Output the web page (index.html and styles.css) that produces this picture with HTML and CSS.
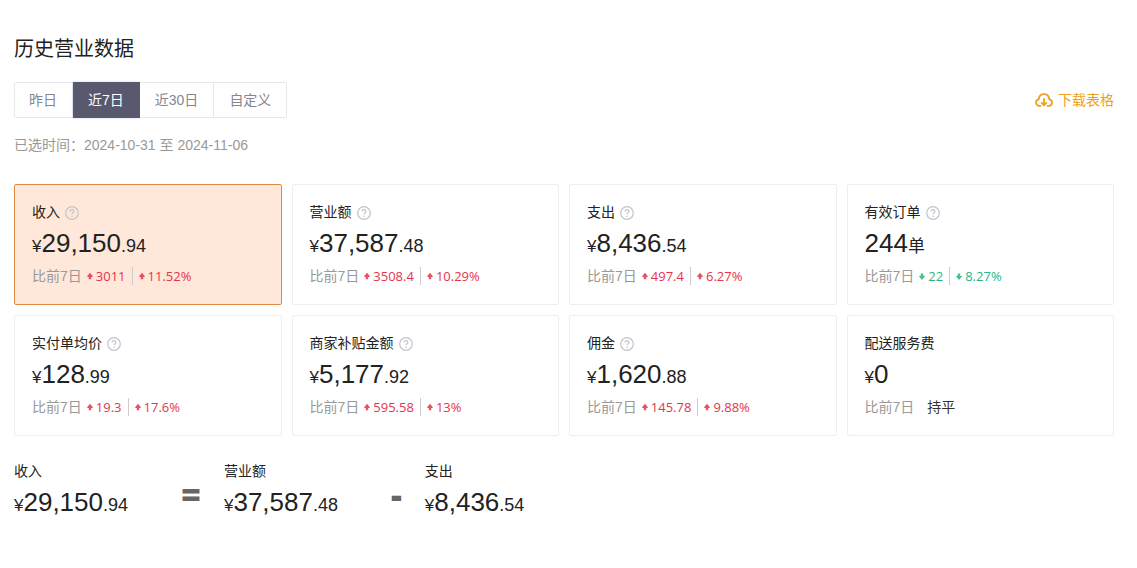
FILE: index.html
```html
<!DOCTYPE html>
<html lang="zh-CN">
<head>
<meta charset="utf-8">
<meta name="viewport" content="width=device-width, initial-scale=1">
<title>历史营业数据</title>
<link rel="stylesheet" href="styles.css">
</head>
<body>
<svg class="sprite" aria-hidden="true">
  <symbol id="help" viewBox="0 0 14 14"><circle cx="7" cy="7" r="6.3" fill="none" stroke="currentColor" stroke-width="1.2"/><path d="M5.1 5.6c0-1.2.8-1.9 1.9-1.9s1.9.7 1.9 1.7c0 1.2-1.8 1.4-1.8 2.9" fill="none" stroke="currentColor" stroke-width="1.2"/><circle cx="7.1" cy="10.2" r=".8" fill="currentColor"/></symbol>
  <symbol id="up" viewBox="0 0 6 8"><path d="M3 .8 5.9 4.2 5.500 4.900H4.200V7.200H1.800V4.900H.5L.1 4.200z" fill="currentColor"/></symbol>
  <symbol id="down" viewBox="0 0 6 8"><path d="M3 7.900 5.900 4.500 5.500 3.800H4.200V1.500H1.800V3.800H.5L.1 4.500z" fill="currentColor"/></symbol>
</svg>
<main class="page">
  <h1 class="title">历史营业数据</h1>
  <div class="toolbar">
    <div class="tabs">
      <button class="tab" type="button">昨日</button>
      <button class="tab active" type="button" aria-pressed="true">近7日</button>
      <button class="tab" type="button">近30日</button>
      <button class="tab" type="button">自定义</button>
    </div>
    <a class="download" href="#"><svg class="cloud" viewBox="0 0 18 14" fill="none" stroke="currentColor" stroke-width="1.8" stroke-linecap="round" stroke-linejoin="round" aria-hidden="true"><path d="M5.500 12.800H4.500C2.400 12.800 1 11.300 1 9.500c0-1.700 1.100-2.900 2.700-3.200C4 3.300 6.200 1.200 9 1.200s5 2.100 5.300 5.100c1.600.3 2.700 1.500 2.700 3.200 0 1.800-1.400 3.300-3.500 3.300h-1"/><path d="M9 6v6.300M6.600 9.900 9 12.300l2.400-2.400"/></svg>下载表格</a>
  </div>
  <p class="range">已选时间：2024-10-31 至 2024-11-06</p>

  <section class="cards">
    <article class="card selected">
      <h2 class="name">收入<svg class="help"><use href="#help"/></svg></h2>
      <p class="value"><span class="unit">¥</span>29,150<span class="cents">.94</span></p>
      <p class="compare">比前7日<span class="delta rise"><svg class="arrow"><use href="#up"/></svg>3011</span><span class="delta rise"><svg class="arrow"><use href="#up"/></svg>11.52%</span></p>
    </article>
    <article class="card">
      <h2 class="name">营业额<svg class="help"><use href="#help"/></svg></h2>
      <p class="value"><span class="unit">¥</span>37,587<span class="cents">.48</span></p>
      <p class="compare">比前7日<span class="delta rise"><svg class="arrow"><use href="#up"/></svg>3508.4</span><span class="delta rise"><svg class="arrow"><use href="#up"/></svg>10.29%</span></p>
    </article>
    <article class="card">
      <h2 class="name">支出<svg class="help"><use href="#help"/></svg></h2>
      <p class="value"><span class="unit">¥</span>8,436<span class="cents">.54</span></p>
      <p class="compare">比前7日<span class="delta rise"><svg class="arrow"><use href="#up"/></svg>497.4</span><span class="delta rise"><svg class="arrow"><use href="#up"/></svg>6.27%</span></p>
    </article>
    <article class="card">
      <h2 class="name">有效订单<svg class="help"><use href="#help"/></svg></h2>
      <p class="value">244<span class="unit">单</span></p>
      <p class="compare">比前7日<span class="delta fall"><svg class="arrow"><use href="#down"/></svg>22</span><span class="delta fall"><svg class="arrow"><use href="#down"/></svg>8.27%</span></p>
    </article>
    <article class="card">
      <h2 class="name">实付单均价<svg class="help"><use href="#help"/></svg></h2>
      <p class="value"><span class="unit">¥</span>128<span class="cents">.99</span></p>
      <p class="compare">比前7日<span class="delta rise"><svg class="arrow"><use href="#up"/></svg>19.3</span><span class="delta rise"><svg class="arrow"><use href="#up"/></svg>17.6%</span></p>
    </article>
    <article class="card">
      <h2 class="name">商家补贴金额<svg class="help"><use href="#help"/></svg></h2>
      <p class="value"><span class="unit">¥</span>5,177<span class="cents">.92</span></p>
      <p class="compare">比前7日<span class="delta rise"><svg class="arrow"><use href="#up"/></svg>595.58</span><span class="delta rise"><svg class="arrow"><use href="#up"/></svg>13%</span></p>
    </article>
    <article class="card">
      <h2 class="name">佣金<svg class="help"><use href="#help"/></svg></h2>
      <p class="value"><span class="unit">¥</span>1,620<span class="cents">.88</span></p>
      <p class="compare">比前7日<span class="delta rise"><svg class="arrow"><use href="#up"/></svg>145.78</span><span class="delta rise"><svg class="arrow"><use href="#up"/></svg>9.88%</span></p>
    </article>
    <article class="card">
      <h2 class="name">配送服务费</h2>
      <p class="value"><span class="unit">¥</span>0</p>
      <p class="compare">比前7日<span class="even">持平</span></p>
    </article>
  </section>

  <section class="equation">
    <div class="term">
      <h2 class="name">收入</h2>
      <p class="value"><span class="unit">¥</span>29,150<span class="cents">.94</span></p>
    </div>
    <span class="operator">=</span>
    <div class="term">
      <h2 class="name">营业额</h2>
      <p class="value"><span class="unit">¥</span>37,587<span class="cents">.48</span></p>
    </div>
    <span class="operator">-</span>
    <div class="term">
      <h2 class="name">支出</h2>
      <p class="value"><span class="unit">¥</span>8,436<span class="cents">.54</span></p>
    </div>
  </section>
</main>
</body>
</html>
```

FILE: styles.css
```css
* { box-sizing: border-box; }
body {
  margin: 0;
  background: #fff;
  color: #222;
  font: 14px/20px "Liberation Sans", "Noto Sans CJK SC", sans-serif;
}
h1, h2, p { margin: 0; font-weight: 400; }
.sprite { display: none; }
.page { padding: 35px 23px 34px 14px; }
.title { font-size: 20px; line-height: 28px; }

.toolbar {
  display: flex;
  justify-content: space-between;
  align-items: center;
  margin-top: 19px;
}
.tabs { display: flex; }
.tab {
  height: 36px;
  padding: 0 15px;
  border: 1px solid #e8e8ec;
  border-left-width: 0;
  background: #fff;
  color: #858692;
  font: inherit;
}
.tab:first-child { padding-left: 14px; border-left-width: 1px; border-radius: 2px 0 0 2px; }
.tab:last-child { border-radius: 0 2px 2px 0; }
.tab.active {
  border-color: #58596e;
  background: #58596e;
  color: #fff;
  box-shadow: 0 0 2px #cfd4f0;
}
.download {
  display: flex;
  align-items: center;
  gap: 5px;
  color: #f0a020;
  text-decoration: none;
}
.cloud { width: 18px; height: 14px; }
.range { margin-top: 17px; color: #999; }

.cards {
  display: grid;
  grid-template-columns: repeat(4, 1fr);
  gap: 10px;
  margin-top: 29px;
}
.card {
  padding: 17px 17px 18px;
  border: 1px solid #eee;
  border-radius: 2px;
}
.card.selected { border-color: #e08a45; background: #ffe8d9; }
.name {
  display: flex;
  align-items: center;
  gap: 5px;
  font-size: 14px;
  line-height: 20px;
}
.help { width: 14px; height: 14px; margin-top: 2px; color: #c3c3cc; }
.value { font-size: 26px; line-height: 42px; }
.unit, .cents { line-height: 20px; }
.unit { font-size: 17px; }
.cents { font-size: 18px; }
.compare {
  display: flex;
  align-items: center;
  margin-top: 2px;
  color: #999;
}
.delta {
  display: flex;
  align-items: center;
  gap: 3px;
  margin-left: 5px;
  font-family: "Open Sans", sans-serif;
  font-size: 13px;
  line-height: 18px;
}
.delta + .delta {
  margin-left: 6px;
  padding-left: 6px;
  border-left: 1px solid #ccc;
}
.arrow { width: 6px; height: 8px; opacity: 0.85; }
.rise { color: #e5344c; }
.fall { color: #2bb583; }
.even { margin-left: 13px; color: #333; }

.equation { display: flex; margin-top: 25px; }
.operator {
  margin: 0 23px 0 53px;
  color: #666;
  font-family: "Open Sans", sans-serif;
  font-size: 34px;
  font-weight: 800;
  line-height: 66px;
}
```
